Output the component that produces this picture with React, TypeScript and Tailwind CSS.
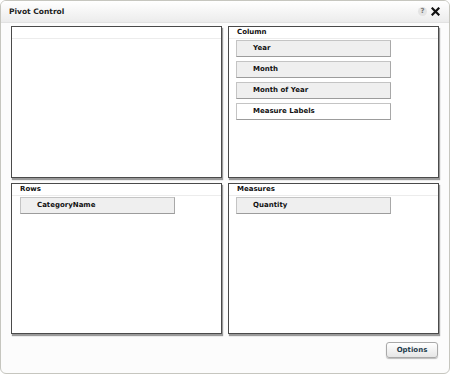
import React from 'react';

const font = { fontFamily: '"DejaVu Sans", Verdana, sans-serif' };

interface FieldProps {
  label: string;
  white?: boolean;
}

const Field: React.FC<FieldProps> = ({ label, white }) => (
  <div
    className={`w-[155px] h-[17px] flex items-center pl-[16px] border border-[#c4c4c4] border-b-[#9c9c9c] border-r-[#a8a8a8] text-[7px] font-bold text-[#111] ${
      white ? 'bg-white' : 'bg-[#efefef]'
    }`}
  >
    {label}
  </div>
);

interface PanelProps {
  title?: string;
  fields?: { label: string; white?: boolean }[];
  indent?: boolean;
}

const Panel: React.FC<PanelProps> = ({ title = '', fields = [], indent }) => (
  <div className="bg-white border border-[#4a4a4a] shadow-[1px_2px_1px_#9a9a9a] flex flex-col">
    <div className="h-[12px] border-b border-[#ececec] px-[8px] flex items-center text-[7px] font-bold text-[#111]">
      {title}
    </div>
    <div className={`flex flex-col gap-[4px] pt-[1px] ${indent ? 'pl-[8px]' : 'pl-[7px]'}`}>
      {fields.map((f) => (
        <Field key={f.label} label={f.label} white={f.white} />
      ))}
    </div>
  </div>
);

export default function App() {
  return (
    <div className="w-[451px] h-[375px] bg-white" style={font}>
      <div className="w-[450px] h-[374px] border border-[#c6c6bf] rounded-[6px] bg-[#fcfcfc] flex flex-col overflow-hidden">
        {/* Title bar */}
        <div className="h-[22px] flex items-center justify-between px-[8px] bg-gradient-to-b from-white to-[#ececec] border-b border-[#e2e2e2]">
          <span className="text-[7.5px] font-bold text-[#222]">Pivot Control</span>
          <div className="flex items-center gap-[4px] pr-[1px]">
            <span className="w-[9px] h-[9px] rounded-full bg-[#e4e4e4] text-[#777] text-[7px] font-bold flex items-center justify-center">
              ?
            </span>
            <svg width="9" height="9" viewBox="0 0 9 9">
              <path d="M1.5 1.5 L7.5 7.5 M7.5 1.5 L1.5 7.5" stroke="#111" strokeWidth="2.2" strokeLinecap="square" />
            </svg>
          </div>
        </div>

        {/* Panels */}
        <div className="pt-[3px] pl-[10px] grid grid-cols-[211px_211px] grid-rows-[152px_151px] gap-x-[6px] gap-y-[5px]">
          <Panel />
          <Panel
            title="Column"
            fields={[
              { label: 'Year' },
              { label: 'Month' },
              { label: 'Month of Year' },
              { label: 'Measure Labels', white: true },
            ]}
          />
          <Panel title="Rows" fields={[{ label: 'CategoryName' }]} indent />
          <Panel title="Measures" fields={[{ label: 'Quantity' }]} />
        </div>

        {/* Footer */}
        <div className="flex justify-end pr-[11px] pt-[8px]">
          <button className="w-[52px] h-[16px] rounded-[3px] border border-[#a9a9a9] bg-gradient-to-b from-white to-[#e6e6e6] text-[7px] font-bold text-[#1d3b4c] shadow-[0_1px_1px_#bbb]">
            Options
          </button>
        </div>
      </div>
    </div>
  );
}
